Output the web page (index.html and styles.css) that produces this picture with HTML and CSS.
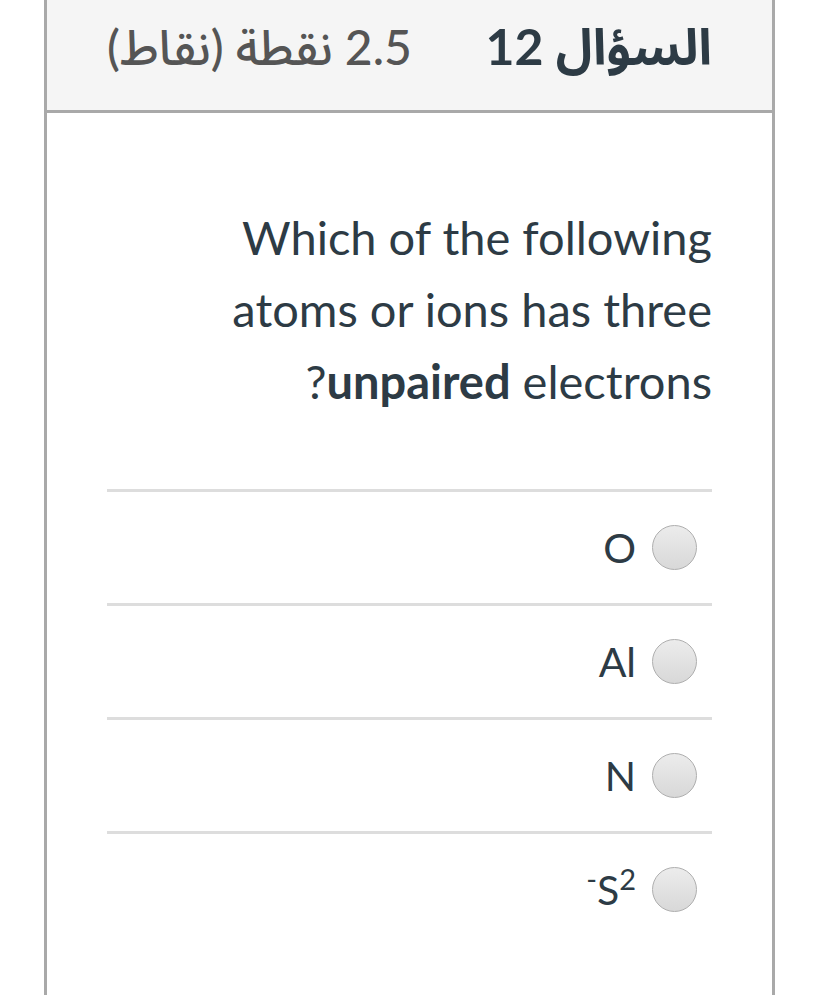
FILE: index.html
```html
<!DOCTYPE html>
<html lang="ar" dir="rtl">
<head>
<meta charset="utf-8">
<title>السؤال 12</title>
<link rel="stylesheet" href="styles.css">
</head>
<body>
<div class="card">
  <div class="header">
    <span class="title">السؤال 12</span>
    <span class="points">2.5 نقطة (نقاط)</span>
  </div>
  <div class="body">
    <div class="question-text">Which of the following atoms or ions has three <strong>unpaired</strong> electrons?</div>
    <div class="answers">
      <label class="answer"><input type="radio" name="q12" class="radio"><span class="label">O</span></label>
      <label class="answer"><input type="radio" name="q12" class="radio"><span class="label">Al</span></label>
      <label class="answer"><input type="radio" name="q12" class="radio"><span class="label">N</span></label>
      <label class="answer"><input type="radio" name="q12" class="radio"><span class="label">S<sup>2-</sup></span></label>
    </div>
  </div>
</div>
</body>
</html>
```
FILE: styles.css
```css
html, body {
  margin: 0;
  padding: 0;
  background: #ffffff;
}
body {
  font-family: Lato, "Noto Sans Arabic", "DejaVu Sans", sans-serif;
  color: #2d3b45;
}
.card {
  margin: 0 auto 0 44px;
  width: 725px;
  border-left: 3px solid #a9a9a9;
  border-right: 3px solid #a9a9a9;
  min-height: 995px;
  box-sizing: content-box;
}
.header {
  height: 110px;
  box-sizing: border-box;
  background: #f5f5f5;
  border-bottom: 3px solid #a9a9a9;
  display: flex;
  align-items: center;
  justify-content: space-between;
  padding: 0 60px 12px;
  height: 113px;
}
.title {
  font-size: 50px;
  font-weight: 700;
  color: #2d3b45;
}
.points {
  font-size: 48px;
  font-weight: 500;
  color: #555555;
}
.body {
  padding: 88px 60px 0;
}
.question-text {
  width: 500px;
  font-size: 47px;
  line-height: 72px;
  text-align: right;
}
.question-text strong {
  font-weight: 700;
}
.answers {
  margin-top: 72px;
}
.answer {
  display: flex;
  align-items: center;
  height: 111px;
  border-top: 3px solid #dddddd;
  padding-right: 15px;
}
.radio {
  appearance: none;
  -webkit-appearance: none;
  margin: 0;
  width: 45px;
  height: 45px;
  border-radius: 50%;
  border: 1.5px solid #aeaeae;
  background: linear-gradient(#ececec, #d8d8d8);
  box-sizing: border-box;
  flex: none;
}
.label {
  font-size: 41px;
  margin-right: 16px;
}
.label sup {
  font-size: 29px;
  vertical-align: 15px;
  line-height: 0;
}
```
